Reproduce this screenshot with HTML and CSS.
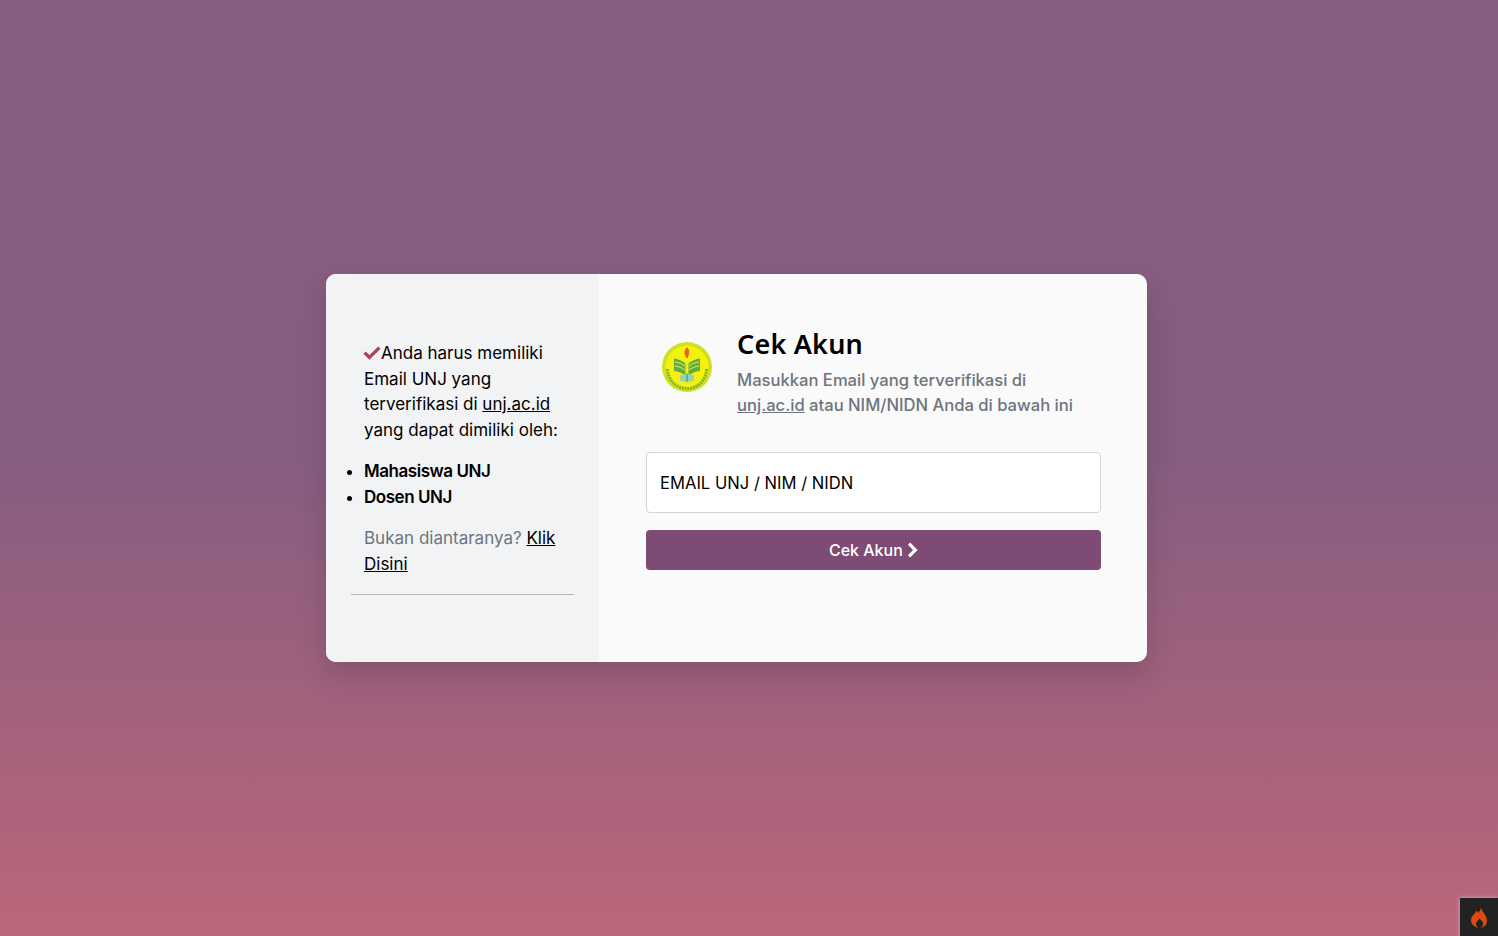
FILE: index.html
```html
<!DOCTYPE html>
<html lang="en">
<head>
    <meta charset="UTF-8">
    <meta name="viewport" content="width=device-width, initial-scale=1.0">
    <title>Cek Akun</title>
    <link rel="stylesheet" href="styles.css">
</head>
<body>
    <div class="login-card">
        <div class="info-panel">
            <div class="info-text">
                <p class="info-intro">
                    <svg class="check-icon" viewBox="0 0 18 14" aria-hidden="true"><path d="M1.600 6.600 6.400 11.400 16.400 1.600" fill="none" stroke="#a8445f" stroke-width="3.400"/></svg>Anda harus memiliki Email UNJ yang terverifikasi di <a href="#">unj.ac.id</a> yang dapat dimiliki oleh:
                </p>
                <ul class="info-list">
                    <li>Mahasiswa UNJ</li>
                    <li>Dosen UNJ</li>
                </ul>
                <p class="info-other">Bukan diantaranya? <a href="#">Klik Disini</a></p>
            </div>
            <hr class="info-rule">
        </div>

        <div class="form-panel">
            <div class="form-header">
                <svg class="logo" viewBox="0 0 50 50" aria-hidden="true">
                    <circle cx="25" cy="25" r="25" fill="#cfe01e"/>
                    <circle cx="25" cy="25" r="21.500" fill="#f4f010"/>
                    <path d="M5.500 27A19.500 19.500 0 0 0 44.500 27" fill="none" stroke="#7fb52f" stroke-width="3" stroke-dasharray="2 .8"/>
                    <path d="M25 5c2.400 2.800 2.800 5 1.800 7.500-.5 1-.8 2-.8 3.500h-2c0-1.600-.5-2.500-1.200-3.500-1-1.800-.2-4.900 2.200-7.500z" fill="#e8641c"/>
                    <path d="M12 16.500c4 .3 8 1.800 11.500 5V34c-3-3-7-4.500-11.500-5z" fill="#62ad40"/>
                    <path d="M38 16.500c-4 .3-8 1.800-11.500 5V34c3-3 7-4.500 11.500-5z" fill="#62ad40"/>
                    <path d="M13 20c3.600.4 7 1.700 10 4M13 24c3.600.4 7 1.700 10 4M37 20c-3.600.4-7 1.700-10 4M37 24c-3.600.4-7 1.700-10 4" fill="none" stroke="#e6f060" stroke-width="1"/>
                    <path d="M18 33.500l7-2 7 2v5.500l-7 1-7-1z" fill="#96d2b4"/>
                    <path d="M25 31.500v8.500" stroke="#3c8a60" stroke-width="1"/>
                </svg>
                <div class="form-title">
                    <h1>Cek Akun</h1>
                    <p>Masukkan Email yang terverifikasi di <a href="#">unj.ac.id</a> atau NIM/NIDN Anda di bawah ini</p>
                </div>
            </div>
            <input class="account-input" type="text" placeholder="EMAIL UNJ / NIM / NIDN">
            <button class="submit-button" type="button">Cek Akun
                <svg class="chevron" viewBox="0 0 11 16" aria-hidden="true"><path d="M2 1.600 8.400 8 2 14.400" fill="none" stroke="#fff" stroke-width="3.200"/></svg>
            </button>
        </div>
    </div>

    <div class="debug-badge">
        <svg viewBox="1 0 13 20" preserveAspectRatio="none" aria-hidden="true"><path d="M8.500 0c1 3-.2 4.600-1.800 6.300C6.500 5.200 6 4.600 5.300 4.200 5.500 6.500 1 8.500 1 13c0 3.500 2.500 6 6 7-1.800-1.500-2.400-3-1.800-4.600.5-1.300 2-2.300 2.600-4 1.800 1.500 3.600 3.800 3 5.600-.3 1.200-1 2.200-2.300 3 3.500-.6 5.500-3.300 5.500-6.500C14 8.500 10 5.500 8.500 0z" fill="#dd4814"/></svg>
    </div>
</body>
</html>
```

FILE: styles.css
```css
* {
    box-sizing: border-box;
}

html, body {
    height: 100%;
}

body {
    margin: 0;
    min-height: 936px;
    display: flex;
    align-items: center;
    justify-content: center;
    padding-right: 25px;
    font-family: Inter, 'Noto Sans', sans-serif;
    font-size: 17px;
    line-height: 25.5px;
    color: #000;
    background: linear-gradient(to bottom, #875d80 0%, #875d80 50%, #bc667a 100%);
}

a {
    color: inherit;
}

p {
    margin: 0;
}

.login-card {
    width: 821px;
    height: 388px;
    display: flex;
    border-radius: 10px;
    overflow: hidden;
    background: #fafafa;
    box-shadow: 0 14px 30px rgba(0, 0, 0, 0.15);
}

.info-panel {
    width: 273px;
    flex-shrink: 0;
    padding: 67px 25px 0;
    background: #f2f3f5;
}

.info-text {
    padding: 0 0 0 13px;
}

.check-icon {
    width: 18px;
    height: 14px;
    margin-left: -1px;
    vertical-align: -1px;
}

.info-list {
    margin: 16px 0;
    padding-left: 0;
    font-weight: 600;
    letter-spacing: -0.45px;
    list-style-position: outside;
}

.info-other {
    color: #6c757d;
}

.info-other a {
    color: #000;
}

.info-rule {
    margin: 17px 0 0;
    border: 0;
    border-top: 1px solid #b5b6b8;
}

.form-panel {
    flex: 1;
    padding: 50px 46px 0 47px;
}

.form-header {
    display: flex;
    align-items: flex-start;
}

.logo {
    width: 50px;
    height: 50px;
    margin: 18px 25px 0 16px;
    flex-shrink: 0;
}

.form-title {
    padding-right: 20px;
}

.form-title h1 {
    margin: 0 0 5px;
    font-family: 'Noto Sans', 'Open Sans', sans-serif;
    font-size: 27px;
    line-height: 39px;
    font-weight: 600;
    letter-spacing: 0.2px;
}

.form-title p {
    font-size: 16.6px;
    line-height: 25px;
    font-weight: 500;
    color: #6c757d;
}

.account-input {
    display: block;
    width: 100%;
    height: 61px;
    margin-top: 34px;
    padding: 0 13px;
    border: 1px solid #ced4da;
    border-radius: 4px;
    background: #fff;
    font: 16.6px Inter, 'Noto Sans', sans-serif;
    color: #000;
}

.account-input::placeholder {
    color: #000;
    opacity: 1;
}

.submit-button {
    display: block;
    width: 100%;
    height: 40px;
    margin-top: 17px;
    border: 0;
    border-radius: 4px;
    background: #7d4b74;
    color: #fff;
    font: 500 16px Inter, 'Noto Sans', sans-serif;
}

.chevron {
    width: 11px;
    height: 16px;
    vertical-align: -2px;
}

.debug-badge {
    position: fixed;
    right: 0;
    bottom: 0;
    width: 38px;
    height: 38px;
    display: flex;
    align-items: center;
    justify-content: center;
    background: #222;
    box-shadow: 0 0 4px rgba(255, 255, 255, 0.5);
}

.debug-badge svg {
    width: 16px;
    height: 22px;
}
```
